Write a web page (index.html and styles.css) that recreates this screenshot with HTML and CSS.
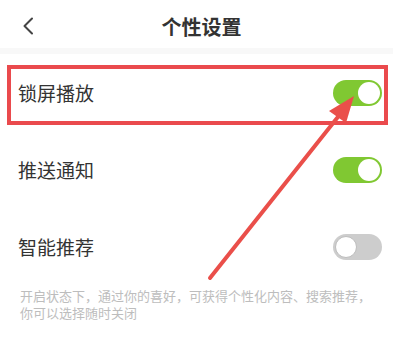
FILE: index.html
```html
<!DOCTYPE html>
<html lang="zh">
<head>
<meta charset="utf-8">
<link rel="stylesheet" href="styles.css">
</head>
<body>
<div class="page">
  <header class="header">
    <svg class="back" width="12" height="18" viewBox="0 0 12 18"><path d="M10 1.5 L2.5 9 L10 16.5" fill="none" stroke="#444" stroke-width="2" stroke-linecap="round" stroke-linejoin="round"/></svg>
    <h1 class="title">个性设置</h1>
  </header>
  <div class="band"></div>
  <section class="list">
    <div class="row">
      <span class="label">锁屏播放</span>
      <span class="toggle on"><span class="knob"></span></span>
    </div>
    <div class="row">
      <span class="label">推送通知</span>
      <span class="toggle on"><span class="knob"></span></span>
    </div>
    <div class="row">
      <span class="label">智能推荐</span>
      <span class="toggle off"><span class="knob"></span></span>
    </div>
    <p class="note">开启状态下，通过你的喜好，可获得个性化内容、搜索推荐，你可以选择随时关闭</p>
  </section>
  <div class="highlight"></div>
  <svg class="arrow" width="393" height="338" viewBox="0 0 393 338">
    <line x1="210" y1="278" x2="349" y2="103" stroke="#ea4f4a" stroke-width="4" stroke-linecap="round"/>
    <polygon points="354,96 329,111 346,123" fill="#ea4f4a"/>
  </svg>
</div>
</body>
</html>
```
FILE: styles.css
```css
html, body {
  margin: 0;
  padding: 0;
  background: #fff;
}
body {
  font-family: "Noto Sans CJK SC", "Noto Sans", sans-serif;
  color: #333;
}
.page {
  position: relative;
  width: 393px;
  height: 338px;
  overflow: hidden;
}
.header {
  position: relative;
  height: 48px;
  box-sizing: border-box;
  padding: 4px 0 0 10px;
  display: flex;
  align-items: center;
  justify-content: center;
}
.back {
  position: absolute;
  left: 22px;
  top: 17px;
}
.title {
  margin: 0;
  font-size: 20px;
  font-weight: 700;
  color: #333;
}
.band {
  height: 6px;
  background: #f8f8f8;
}
.list {
  padding: 0 11px 0 18px;
}
.row {
  height: 77px;
  display: flex;
  align-items: center;
  justify-content: space-between;
}
.label {
  font-size: 19px;
  color: #333;
}
.toggle {
  position: relative;
  width: 49px;
  height: 26px;
  border-radius: 13px;
  box-sizing: border-box;
  display: flex;
  align-items: center;
  padding: 2px;
}
.toggle.on {
  background: #80c832;
  justify-content: flex-end;
}
.toggle.off {
  background: #cdcdcd;
  justify-content: flex-start;
}
.knob {
  width: 22px;
  height: 22px;
  border-radius: 50%;
  background: #fff;
  box-sizing: border-box;
}
.toggle.off .knob {
  border: 1px solid #bdbdbd;
}
.note {
  margin: 2px 0 0 2px;
  font-size: 13px;
  line-height: 17px;
  color: #bdbdbd;
}
.highlight {
  position: absolute;
  left: 7px;
  top: 65px;
  width: 381px;
  height: 60px;
  box-sizing: border-box;
  border: 4px solid #ea4a4d;
}
.arrow {
  position: absolute;
  left: 0;
  top: 0;
}
```
